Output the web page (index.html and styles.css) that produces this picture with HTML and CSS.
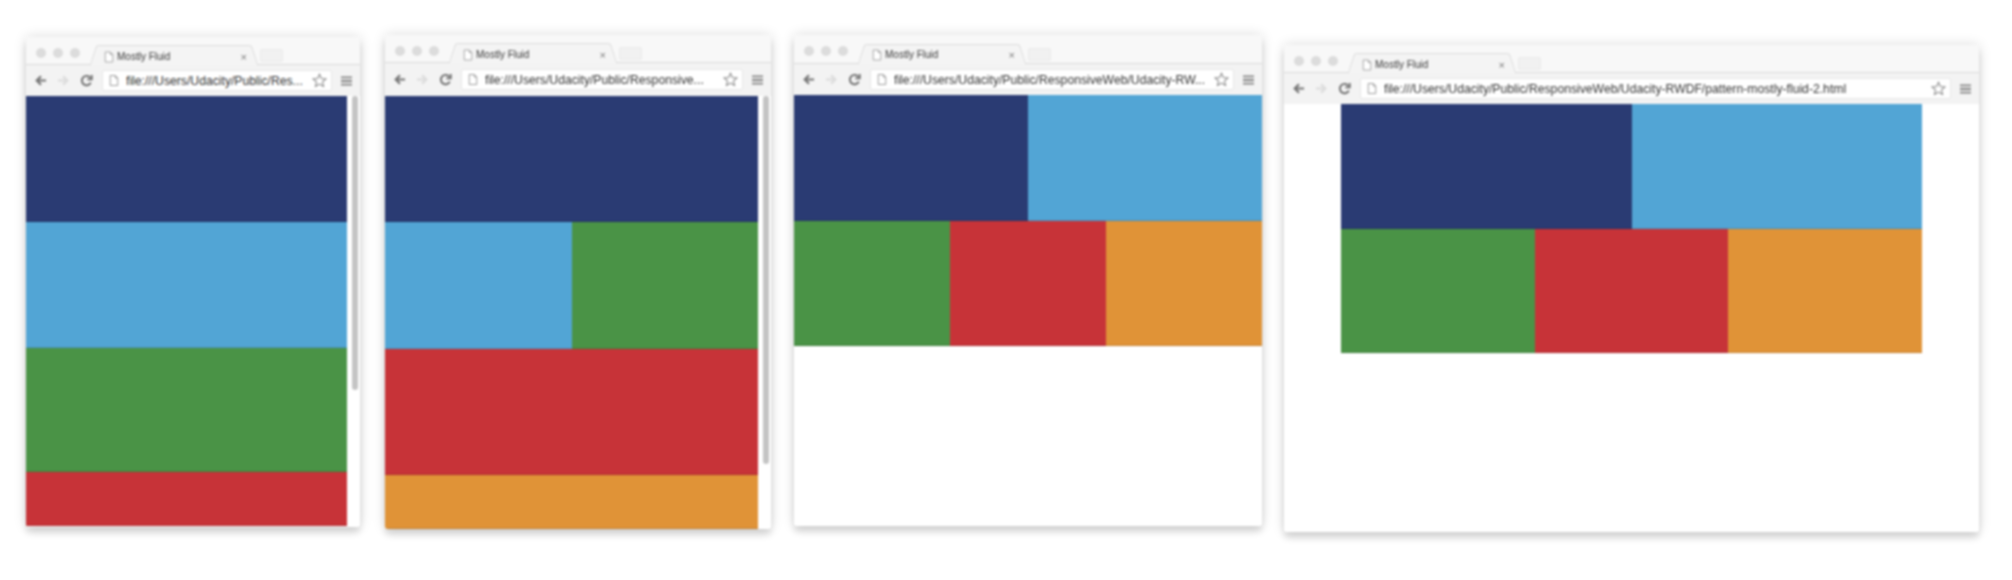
FILE: index.html
```html
<!DOCTYPE html>
<html lang="en">
<head>
<meta charset="utf-8">
<title>Mostly Fluid</title>
<link rel="stylesheet" href="styles.css">
</head>
<body>
<svg class="sprite" aria-hidden="true">
  <symbol id="i-back" viewBox="0 0 14 14"><path d="M13 7H3M7.5 2.5L3 7l4.5 4.5" fill="none" stroke="currentColor" stroke-width="2.4"/></symbol>
  <symbol id="i-reload" viewBox="0 0 14 14"><path d="M11.6 9.2A5 5 0 1 1 11 4M12.6 1.2v4.6H8" fill="none" stroke="currentColor" stroke-width="2"/></symbol>
  <symbol id="i-doc" viewBox="0 0 12 14"><path d="M1.5 1h6l3 3v9h-9zM7.500 1v3h3" fill="#fff" stroke="currentColor" stroke-width="1"/></symbol>
  <symbol id="i-star" viewBox="0 0 16 16"><path d="M8 1.300l2 4.500 4.900.5-3.700 3.200 1.100 4.800L8 11.800l-4.300 2.500 1.100-4.800L1.100 6.300l4.900-.5z" fill="#fff" stroke="currentColor" stroke-width="1.100"/></symbol>
  <symbol id="i-menu" viewBox="0 0 12 12"><path d="M0 2h12M0 6h12M0 10h12" fill="none" stroke="currentColor" stroke-width="2"/></symbol>
</svg>
<main class="desk">

  <section class="win win-1">
    <div class="strip">
      <div class="lights"><i></i><i></i><i></i></div>
      <div class="tab"><svg class="fav"><use href="#i-doc"/></svg><span class="tab-title">Mostly Fluid</span><span class="tab-x">×</span></div>
      <div class="newtab"></div>
    </div>
    <div class="bar">
      <svg class="nav"><use href="#i-back"/></svg>
      <svg class="nav fwd"><use href="#i-back"/></svg>
      <svg class="nav rel"><use href="#i-reload"/></svg>
      <div class="omni"><svg class="doc"><use href="#i-doc"/></svg><span class="url">file:///Users/Udacity/Public/Res...</span><svg class="star"><use href="#i-star"/></svg></div>
      <svg class="menu"><use href="#i-menu"/></svg>
    </div>
    <div class="view">
      <div class="page page-1">
        <div class="block navy"></div>
        <div class="block sky"></div>
        <div class="block green"></div>
        <div class="block red"></div>
      </div>
      <div class="gutter"><div class="thumb thumb-1"></div></div>
    </div>
  </section>

  <section class="win win-2">
    <div class="strip">
      <div class="lights"><i></i><i></i><i></i></div>
      <div class="tab"><svg class="fav"><use href="#i-doc"/></svg><span class="tab-title">Mostly Fluid</span><span class="tab-x">×</span></div>
      <div class="newtab"></div>
    </div>
    <div class="bar">
      <svg class="nav"><use href="#i-back"/></svg>
      <svg class="nav fwd"><use href="#i-back"/></svg>
      <svg class="nav rel"><use href="#i-reload"/></svg>
      <div class="omni"><svg class="doc"><use href="#i-doc"/></svg><span class="url">file:///Users/Udacity/Public/Responsive...</span><svg class="star"><use href="#i-star"/></svg></div>
      <svg class="menu"><use href="#i-menu"/></svg>
    </div>
    <div class="view">
      <div class="page page-2">
        <div class="block navy wide"></div>
        <div class="block sky"></div>
        <div class="block green"></div>
        <div class="block red wide"></div>
        <div class="block orange wide"></div>
      </div>
      <div class="gutter"><div class="thumb thumb-2"></div></div>
    </div>
  </section>

  <section class="win win-3">
    <div class="strip">
      <div class="lights"><i></i><i></i><i></i></div>
      <div class="tab"><svg class="fav"><use href="#i-doc"/></svg><span class="tab-title">Mostly Fluid</span><span class="tab-x">×</span></div>
      <div class="newtab"></div>
    </div>
    <div class="bar">
      <svg class="nav"><use href="#i-back"/></svg>
      <svg class="nav fwd"><use href="#i-back"/></svg>
      <svg class="nav rel"><use href="#i-reload"/></svg>
      <div class="omni"><svg class="doc"><use href="#i-doc"/></svg><span class="url">file:///Users/Udacity/Public/ResponsiveWeb/Udacity-RW...</span><svg class="star"><use href="#i-star"/></svg></div>
      <svg class="menu"><use href="#i-menu"/></svg>
    </div>
    <div class="view">
      <div class="page page-3">
        <div class="block navy half"></div>
        <div class="block sky half"></div>
        <div class="block green third"></div>
        <div class="block red third"></div>
        <div class="block orange third"></div>
      </div>
    </div>
  </section>

  <section class="win win-4">
    <div class="strip">
      <div class="lights"><i></i><i></i><i></i></div>
      <div class="tab"><svg class="fav"><use href="#i-doc"/></svg><span class="tab-title">Mostly Fluid</span><span class="tab-x">×</span></div>
      <div class="newtab"></div>
    </div>
    <div class="bar">
      <svg class="nav"><use href="#i-back"/></svg>
      <svg class="nav fwd"><use href="#i-back"/></svg>
      <svg class="nav rel"><use href="#i-reload"/></svg>
      <div class="omni"><svg class="doc"><use href="#i-doc"/></svg><span class="url">file:///Users/Udacity/Public/ResponsiveWeb/Udacity-RWDF/pattern-mostly-fluid-2.html</span><svg class="star"><use href="#i-star"/></svg></div>
      <svg class="menu"><use href="#i-menu"/></svg>
    </div>
    <div class="view view-centered">
      <div class="page page-4">
        <div class="block navy half"></div>
        <div class="block sky half"></div>
        <div class="block green third"></div>
        <div class="block red third"></div>
        <div class="block orange third"></div>
      </div>
    </div>
  </section>

</main>
</body>
</html>
```
FILE: styles.css
```css
* { box-sizing: border-box; }

html, body {
  margin: 0;
  background: #fff;
}

.sprite { display: none; }

.desk {
  display: flex;
  align-items: flex-start;
  height: 580px;
  padding-left: 26px;
  overflow: hidden;
  filter: blur(0.8px);
  font-family: "Liberation Sans", Arial, sans-serif;
}

.win {
  display: flex;
  flex-direction: column;
  flex: none;
  background: #fff;
  border-radius: 3px;
  box-shadow: 0 6px 7px rgba(0, 0, 0, 0.13), 0 0 13px rgba(0, 0, 0, 0.14);
}

.win-1 { width: 334px; height: 490px; margin-top: 37px; }
.win-2 { width: 386px; height: 494px; margin-top: 35px; margin-left: 25px; }
.win-3 { width: 468px; height: 491px; margin-top: 35px; margin-left: 23px; }
.win-4 { width: 695px; height: 487px; margin-top: 45px; margin-left: 22px; }

/* tab strip */
.strip {
  display: flex;
  align-items: flex-end;
  flex: none;
  height: 28px;
  padding-left: 8px;
  background: #f8f8f8;
  border-bottom: 1px solid #d9d9d9;
  border-radius: 3px 3px 0 0;
}

.win-3 .strip { height: 29px; }

.lights {
  display: flex;
  align-self: flex-start;
  gap: 7px;
  width: 56px;
  padding: 11px 0 0 2px;
}

.lights i {
  width: 10px;
  height: 10px;
  border-radius: 50%;
  background: #dcdcdc;
}

.tab {
  position: relative;
  display: flex;
  align-items: center;
  width: 152px;
  height: 20px;
  margin-left: 8px;
  margin-bottom: -1px;
  padding: 2px 3px 0 6px;
  background: #f4f4f4;
  border-top: 1px solid #dcdcdc;
  border-radius: 4px 4px 0 0;
}

.win-3 .tab { padding-top: 0; }

.tab::before,
.tab::after {
  content: "";
  position: absolute;
  top: -1px;
  bottom: 0;
  width: 10px;
  background: #f4f4f4;
  border-top: 1px solid #dcdcdc;
}

.tab::before {
  left: -5px;
  border-left: 1px solid #d4d4d4;
  border-radius: 3px 0 0 0;
  transform: skewX(-18deg);
}

.tab::after {
  right: -5px;
  border-right: 1px solid #d4d4d4;
  border-radius: 0 3px 0 0;
  transform: skewX(18deg);
}

.fav {
  position: relative;
  z-index: 1;
  flex: none;
  width: 10px;
  height: 12px;
  color: #9a9a9a;
}

.tab-title {
  position: relative;
  z-index: 1;
  flex: 1;
  margin-left: 3px;
  font-size: 10px;
  color: #3a3a3a;
  white-space: nowrap;
}

.tab-x {
  position: relative;
  z-index: 1;
  font-size: 11px;
  color: #777;
}

.newtab {
  width: 23px;
  height: 13px;
  margin-left: 10px;
  margin-bottom: 2px;
  background: #f1f1f1;
  border: 1px solid #e9e9e9;
  border-radius: 2px;
}

/* toolbar */
.bar {
  display: flex;
  align-items: center;
  flex: none;
  height: 31px;
  padding: 0 8px 0 8px;
  background: #f3f3f3;
}

.win-2 .bar { height: 33px; }

.nav {
  flex: none;
  width: 13px;
  height: 13px;
  margin-right: 10px;
  color: #757575;
}

.fwd { color: #dcdcdc; transform: scaleX(-1); }
.rel { margin-right: 9px; color: #6c6c6c; }

.omni {
  display: flex;
  align-items: center;
  flex: 1;
  min-width: 0;
  height: 21px;
  padding: 0 4px 0 6px;
  background: #fff;
  border: 1px solid #e8e8e8;
  border-radius: 2px;
}

.doc {
  flex: none;
  width: 10px;
  height: 13px;
  color: #8c8c8c;
}

.url {
  flex: 1;
  min-width: 0;
  margin-left: 7px;
  font-size: 12.200px;
  color: #333;
  white-space: nowrap;
  overflow: hidden;
}

.star {
  flex: none;
  width: 15px;
  height: 15px;
  color: #8a8a8a;
}

.menu {
  flex: none;
  width: 11px;
  height: 12px;
  margin-left: 9px;
  color: #858585;
}

/* viewport */
.view {
  display: flex;
  flex: 1;
  min-height: 0;
  overflow: hidden;
  border-radius: 0 0 3px 3px;
  background: #fff;
}

.view-centered { justify-content: center; }

.page { display: grid; flex: none; align-content: start; }

.page-1 {
  width: 321px;
  grid-template-rows: 126px 126px 124px 54px;
}

.page-2 {
  width: 373px;
  grid-template-columns: 187px 186px;
  grid-template-rows: 126px 127px 126px 54px;
}

.page-3 {
  width: 100%;
  grid-template-columns: repeat(6, 1fr);
  grid-template-rows: 126px 125px;
}

.page-4 {
  width: 581px;
  grid-template-columns: repeat(6, 1fr);
  grid-template-rows: 125px 124px;
}

.block { box-shadow: inset 0 -1px 0 rgba(0, 0, 0, 0.12); }
.wide { grid-column: 1 / -1; }
.half { grid-column: span 3; }
.third { grid-column: span 2; }

.navy { background: #2a3b73; }
.sky { background: #52a5d5; }
.green { background: #4a9346; }
.red { background: #c73338; }
.orange { background: #e09337; }

.gutter {
  flex: 1;
  padding: 0 2px 0 5px;
}

.thumb {
  width: 6px;
  border-radius: 3px;
  background: #c4c4c4;
}

.thumb-1 { height: 294px; }
.thumb-2 { height: 368px; }
```
